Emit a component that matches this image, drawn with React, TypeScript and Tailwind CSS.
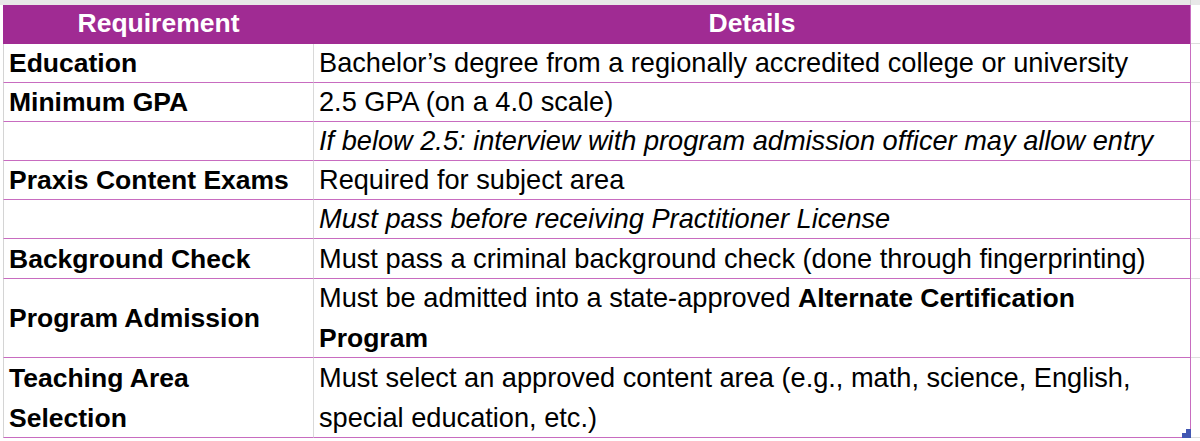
import type { ReactNode } from "react";

type Row = {
  label: ReactNode;
  details: ReactNode;
  tall?: boolean;
};

const rows: Row[] = [
  {
    label: "Education",
    details: "Bachelor’s degree from a regionally accredited college or university",
  },
  { label: "Minimum GPA", details: "2.5 GPA (on a 4.0 scale)" },
  {
    label: "",
    details: (
      <span className="italic">
        If below 2.5: interview with program admission officer may allow entry
      </span>
    ),
  },
  { label: "Praxis Content Exams", details: "Required for subject area" },
  {
    label: "",
    details: <span className="italic">Must pass before receiving Practitioner License</span>,
  },
  {
    label: "Background Check",
    details: "Must pass a criminal background check (done through fingerprinting)",
  },
  {
    label: "Program Admission",
    details: (
      <>
        Must be admitted into a state-approved <b className="text-[26.5px]">Alternate Certification</b>
        <br />
        <b className="text-[26.5px]">Program</b>
      </>
    ),
    tall: true,
  },
  {
    label: (
      <>
        Teaching Area
        <br />
        Selection
      </>
    ),
    details: (
      <>
        Must select an approved content area (e.g., math, science, English,
        <br />
        special education, etc.)
      </>
    ),
    tall: true,
  },
];

export default function App() {
  return (
    <div className="w-[1200px] h-[441px] bg-white overflow-hidden relative font-['Liberation_Sans',Arial,sans-serif] text-black">
      {/* column header strip */}
      <div className="flex h-[5px] bg-[#e8e8e8]">
        <div className="w-[1191px] border-r border-[#d0d0d0]" />
        <div className="flex-1" />
      </div>

      <div className="flex">
        <div className="w-[3px]" />
        <div className="flex-1">
          {/* header */}
          <div className="flex h-[38.5px]">
            <div className="w-[311px] bg-[#a02b93] flex items-center justify-center text-white font-bold text-[26.5px]">
              Requirement
            </div>
            <div className="w-[877px] bg-[#a02b93] border-r border-[#c86cc0] flex items-center justify-center text-white font-bold text-[26.5px]">
              Details
            </div>
            <div className="flex-1 border-b border-[#dedede]" />
          </div>

          {rows.map((row, i) => (
            <div key={i} className={`flex ${row.tall ? "h-[79.6px]" : "h-[39.2px]"}`}>
              <div className="w-[311px] border-l border-r border-l-[#d4d4d4] border-r-[#d9d9d9] border-b border-b-[#c86cc0] pl-[5px] flex items-center font-bold text-[26.5px] leading-[40px]">
                <div>{row.label}</div>
              </div>
              <div className="w-[877px] border-r border-b border-[#c86cc0] pl-[5px] pr-2 flex items-center text-[27.2px] leading-[40px]">
                <div>{row.details}</div>
              </div>
              <div className="flex-1 border-b border-[#dedede]" />
            </div>
          ))}
        </div>
      </div>

      {/* fill handle */}
      <div className="absolute left-[1182px] top-[429px] w-[9px] h-[9px] bg-[#4257b2]" />
      <div className="absolute left-[1182px] top-[429px] w-[4px] h-[4px] bg-white" />
    </div>
  );
}
